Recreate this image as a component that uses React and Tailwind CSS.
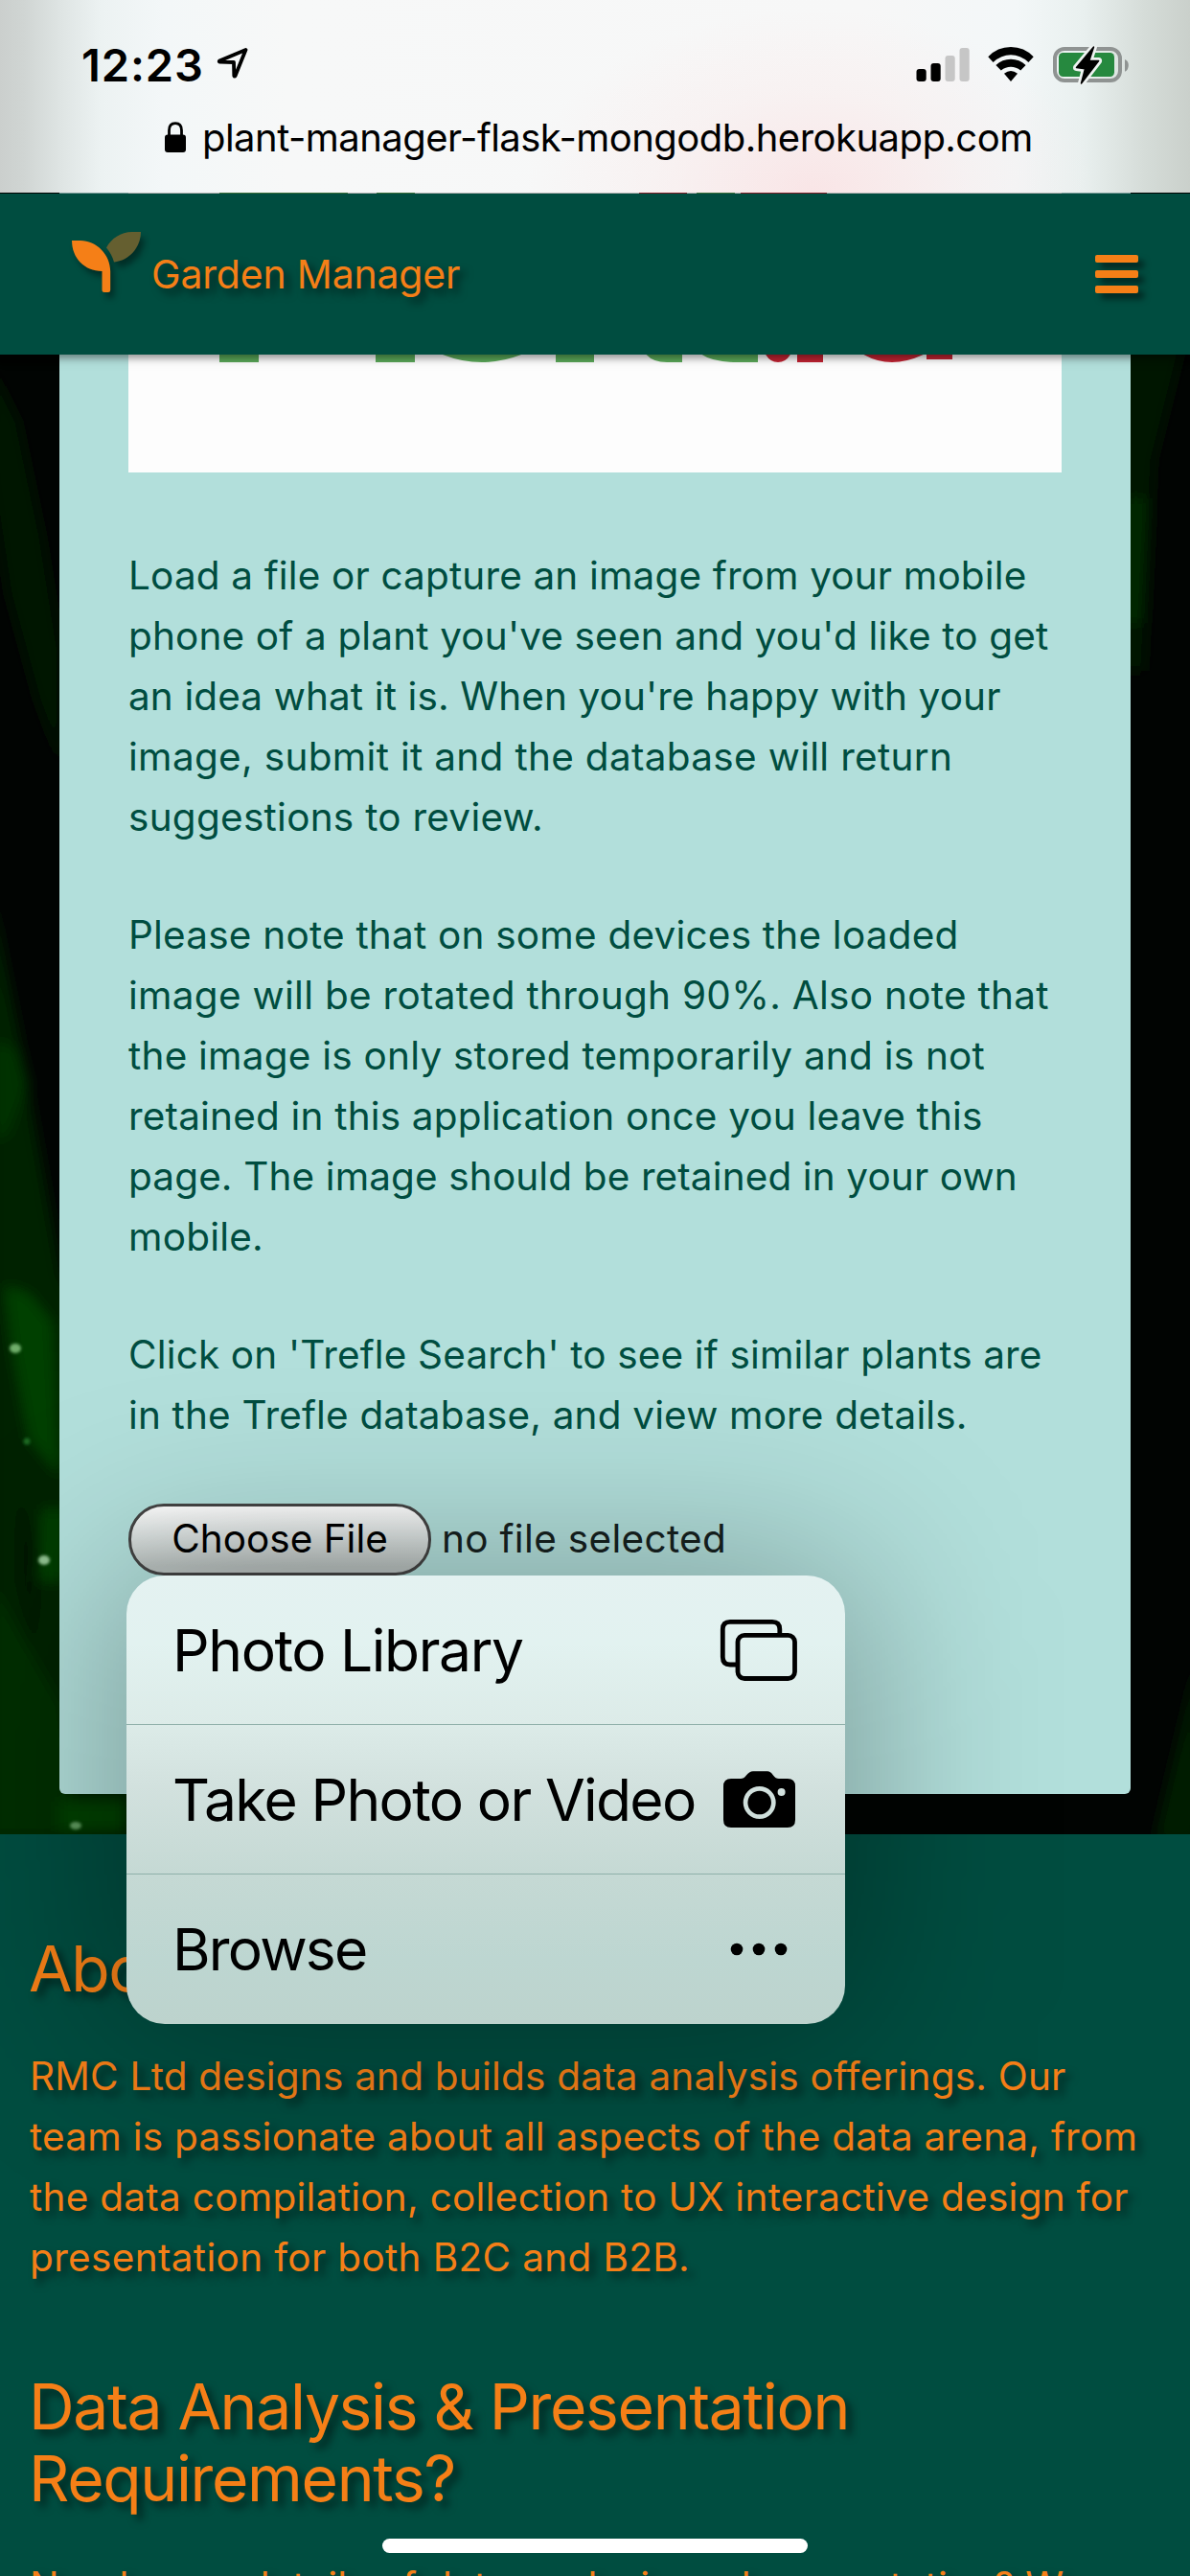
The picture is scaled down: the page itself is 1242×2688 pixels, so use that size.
import React from "react";

const intro = [
  [
    ["Load a file or capture an image from your mobile", "tracking-[0.15px]"],
    ["phone of a plant you've seen and you'd like to get", "tracking-[0.15px]"],
    ["an idea what it is. When you're happy with your", "tracking-[0.11px]"],
    ["image, submit it and the database will return", "tracking-[0.31px]"],
    ["suggestions to review.", "tracking-[0.26px]"],
  ],
  [
    ["Please note that on some devices the loaded", "tracking-[0.21px]"],
    ["image will be rotated through 90%. Also note that", "tracking-[0.28px]"],
    ["the image is only stored temporarily and is not", "tracking-[0.22px]"],
    ["retained in this application once you leave this", "tracking-[0.18px]"],
    ["page. The image should be retained in your own", "tracking-[0.12px]"],
    ["mobile.", "tracking-[0.2px]"],
  ],
  [
    ["Click on 'Trefle Search' to see if similar plants are", "tracking-[0.15px]"],
    ["in the Trefle database, and view more details.", "tracking-[0.16px]"],
  ],
];

const about = [
  ["RMC Ltd designs and builds data analysis offerings. Our", "tracking-[0.21px]"],
  ["team is passionate about all aspects of the data arena, from", "tracking-[0.24px]"],
  ["the data compilation, collection to UX interactive design for", "tracking-[0.27px]"],
  ["presentation for both B2C and B2B.", "tracking-[0.34px]"],
];

function Lines({ lines, className = "" }) {
  return (
    <p className={"text-[40.5px] leading-[63px] whitespace-nowrap " + className}>
      {lines.map(([text, tracking]) => (
        <span key={text} className={"block " + tracking}>
          {text}
        </span>
      ))}
    </p>
  );
}

function LocationArrow() {
  return (
    <svg className="ml-[13px] mt-[1px] h-[34px] w-[34px]" viewBox="0 0 34 34" fill="none" stroke="#000" strokeWidth="3.8" strokeLinejoin="round">
      <path d="M30.5 3 L3 14.6 Q2.4 15.4 3.4 15.6 L18 16 L18.3 30 Q18.8 31.4 19.6 30 Z" />
    </svg>
  );
}

function Signal() {
  return (
    <svg className="h-[40px] w-[56px]" viewBox="0 0 56 40">
      <rect x="0.5" y="24" width="10.2" height="13" rx="3" />
      <rect x="15.5" y="18" width="10.2" height="19" rx="3" />
      <rect x="30.5" y="10" width="10.2" height="27" rx="3" fill="#c6c6c6" />
      <rect x="45.5" y="2" width="10.2" height="35" rx="3" fill="#c6c6c6" />
    </svg>
  );
}

function Wifi() {
  return (
    <svg className="ml-[19px] h-[40px] w-[48px]" viewBox="0 0 48 40">
      <path d="M0.3 11.2 Q10 1 24 1 Q38 1 47.7 11.2 L42.4 16.9 Q34 9.2 24 9.2 Q14 9.2 5.6 16.9 Z" />
      <path d="M8.4 19.9 Q15 13.8 24 13.8 Q33 13.8 39.6 19.9 L34.2 25.5 Q29.5 21.8 24 21.8 Q18.5 21.8 13.8 25.5 Z" />
      <path d="M17 28.7 Q20.5 26 24 26 Q27.5 26 31 28.7 L24 37 Z" />
    </svg>
  );
}

function Battery() {
  const bolt = "M24.5 22.5 L42.5 1 L37.8 15.2 L47.6 15.6 L29.5 39 L33.5 23.7 Z";
  return (
    <svg className="ml-[20px] h-[40px] w-[80px]" viewBox="0 0 80 40">
      <rect x="2" y="3" width="68" height="33" rx="10" fill="none" stroke="#8f9392" strokeWidth="4" />
      <rect x="6" y="7" width="58" height="25" rx="4.5" fill="#26893f" />
      <path d="M75 14 Q78.8 15.6 78.8 20 Q78.8 25 75 26.8 Z" fill="#8f9392" />
      <path d={bolt} fill="none" stroke="#eff3f2" strokeWidth="7" strokeLinejoin="round" />
      <path d={bolt} stroke="#000" strokeWidth="1.5" strokeLinejoin="round" />
    </svg>
  );
}

function Sprout() {
  return (
    <svg
      className="h-[64px] w-[72px] overflow-visible drop-shadow-[4px_6px_3px_rgba(0,0,0,0.4)]"
      viewBox="75 242 72 64"
    >
      <path d="M75 251 H84 C101 251 115.2 266 115.2 283 V302.5 Q115.2 305 113 305 H109 Q106.5 305 106.5 302.5 V283 C88 283 75 269 75 251 Z" fill="#f57f17" />
      <path d="M147 242 H138 C126 242 116 249 111 258.5 C115 263 117.5 268 119 273.5 C135 272 147 258 147 242 Z" fill="#655f30" />
    </svg>
  );
}

function LeafPhoto() {
  return (
    <svg className="absolute inset-0 h-full w-full" viewBox="0 370 1242 1544" preserveAspectRatio="none">
      <defs>
        <filter id="soft" filterUnits="userSpaceOnUse" x="-60" y="300" width="1380" height="1700">
          <feGaussianBlur stdDeviation="7" />
        </filter>
        <filter id="tiny" filterUnits="userSpaceOnUse" x="0" y="1380" width="140" height="560">
          <feGaussianBlur stdDeviation="1.5" />
        </filter>
      </defs>
      <rect x="0" y="370" width="1242" height="1544" fill="#010402" />
      <g filter="url(#soft)">
        <path d="M-10 380 L20 440 L45 560 L64 680 L64 800 L38 730 L8 620 L-10 500 Z" fill="#021702" />
        <path d="M-10 930 L20 1080 L64 1330 L140 1500 V1930 H-10 Z" fill="#022402" />
        <path d="M-10 1085 L18 1095 L30 1130 L8 1185 L-10 1190 Z" fill="#043304" />
        <path d="M5 1342 L30 1350 L54 1380 L62 1540 L30 1500 L12 1400 Z" fill="#034103" />
        <path d="M44 1575 H66 V1650 H40 Z" fill="#033c03" />
        <path d="M20 1560 L40 1620 L36 1720 L20 1650 Z" fill="#011401" />
        <path d="M-10 1650 L64 1780 L80 1914 H-10 Z" fill="#022e02" />
        <path d="M62 1880 H130 V1910 H62 Z" fill="#033f03" />
        <path d="M1170 360 H1235 L1205 480 L1195 700 H1170 Z" fill="#021802" />
        <path d="M1175 520 H1196 L1190 650 H1175 Z" fill="#032c05" />
        <path d="M1250 1730 L1205 1920 H1250 Z" fill="#021c02" />
      </g>
      <g filter="url(#tiny)">
        <ellipse cx="16" cy="1407" rx="6" ry="5" fill="#6fae6a" />
        <circle cx="28" cy="1504" r="3.5" fill="#1f6a24" />
        <ellipse cx="46" cy="1628" rx="6" ry="5" fill="#8fbf8f" />
        <ellipse cx="79" cy="1905" rx="6" ry="4" fill="#5f9a5f" />
      </g>
    </svg>
  );
}

function LogoBottom() {
  return (
    <svg className="block h-[8px] w-[974px]" viewBox="134 370 974 8">
      <g fill="#5cab5a">
        <rect x="229" y="368" width="41" height="10" />
        <rect x="392" y="368" width="41" height="10" />
        <path d="M457 368 H549 Q526 378 503 378 Q480 378 457 368 Z" />
        <rect x="580" y="368" width="40" height="10" />
        <path d="M673 368 H712 V378 H696 Q680 378 673 368 Z" />
        <path d="M730 368 H791 V378 H765 Q740 377 730 368 Z" />
      </g>
      <g fill="#c42433">
        <path d="M798 368 H826 Q821 378 812 378 Q803 378 798 368 Z" />
        <rect x="832" y="368" width="27" height="10" />
        <path d="M898 368 H968 Q948 378 931 378 Q914 378 898 368 Z" />
        <rect x="967" y="368" width="27" height="7" />
      </g>
    </svg>
  );
}

function PhotosIcon() {
  return (
    <svg className="h-[66px] w-[82px]" viewBox="751 1690 82 66" fill="none" stroke="#000" strokeWidth="4.8">
      <path d="M768 1738 H762 Q754.3 1738 754.3 1730 V1701 Q754.3 1693.3 762 1693.3 H806 Q813.8 1693.3 813.8 1701 V1707" />
      <rect x="770" y="1707.3" width="59.5" height="45.2" rx="7" />
    </svg>
  );
}

function CameraIcon() {
  return (
    <svg className="mr-[2px] h-[60px] w-[76px]" viewBox="754 1848 76 60">
      <path
        fillRule="evenodd"
        d="M754 1864 Q754 1856 762 1856 H772 Q775.5 1856 777.5 1853 Q781 1848.3 785 1848.3 H800 Q803 1848.3 806 1852.5 Q808.5 1856 812 1856 H821 Q829 1856 829 1864 V1899 Q829 1907 821 1907 H762 Q754 1907 754 1899 Z M791.7 1864 A17 17 0 1 0 791.7 1898 A17 17 0 1 0 791.7 1864 Z M814.6 1866 A4 4 0 1 0 814.6 1874 A4 4 0 1 0 814.6 1866 Z"
      />
      <circle cx="791.7" cy="1881" r="12.3" />
    </svg>
  );
}

function MoreIcon() {
  return (
    <svg className="mr-[11px] h-[14px] w-[60px]" viewBox="761 2028 60 14">
      <circle cx="768" cy="2035" r="6.3" />
      <circle cx="791" cy="2035" r="6.3" />
      <circle cx="814" cy="2035" r="6.3" />
    </svg>
  );
}

const menu = [
  ["Photo Library", "tracking-[-1.38px] pl-[48px]", PhotosIcon],
  ["Take Photo or Video", "tracking-[-1.65px] pl-[48px]", CameraIcon],
  ["Browse", "tracking-[-1.8px] pl-[48px]", MoreIcon],
];

export default function App() {
  return (
    <div className="relative flex h-[2688px] w-[1242px] flex-col overflow-hidden bg-[#004d40] font-['Inter','Liberation_Sans',sans-serif] text-black">
      <div className="relative z-30 flex h-[201px] shrink-0 flex-col bg-[radial-gradient(ellipse_300px_190px_at_850px_200px,rgba(250,218,220,0.62),rgba(250,225,225,0.25)_55%,rgba(250,230,230,0)),linear-gradient(90deg,#cbcfcd_0px,#d0d5d3_25px,#dfe5e4_65px,#ecf2f2_105px,#f3f7f8_170px,#f7f8f8_300px,#f7f7f7_900px,#f3f7f8_1060px,#e9f0ef_1130px,#d5dcd8_1195px,#cad0cb_1242px)]">
        <div className="flex h-[114px] items-start pt-[48px] pr-[63px] pl-[85px]">
          <span className="-mt-[8px] text-[47px] leading-[56px] font-semibold tracking-[0.9px]">12:23</span>
          <LocationArrow />
          <div className="ml-auto flex">
            <Signal />
            <Wifi />
            <Battery />
          </div>
        </div>
        <div className="flex h-[57px] pl-[172px]">
          <svg className="mt-[13px] h-[32px] w-[22px]" viewBox="0 0 22 32">
            <path d="M4.5 16 V9 Q4.5 1.6 11 1.6 Q17.5 1.6 17.5 9 V16" fill="none" stroke="#000" strokeWidth="2.8" />
            <rect x="0" y="13.5" width="22" height="18.5" rx="3" />
          </svg>
          <span className="ml-[17px] text-[40px] leading-[59px] tracking-[-0.53px] whitespace-nowrap">
            plant-manager-flask-mongodb.herokuapp.com
          </span>
        </div>
      </div>

      <div className="relative z-30 flex h-px shrink-0">
        <div className="w-[62px] bg-black" />
        <div className="w-[72px] bg-[#7d9d9a]" />
        <div className="flex w-[974px] bg-[#b3b3b3]">
          <div className="ml-[95px] w-[134px] bg-[#3a6d3a]" />
          <div className="ml-[30px] w-[40px] bg-[#3a6d3a]" />
          <div className="ml-[234px] w-[50px] bg-[#7d1a24]" />
          <div className="ml-[10px] w-[40px] bg-[#3a6d3a]" />
          <div className="ml-[6px] w-[90px] bg-[#7d1a24]" />
        </div>
        <div className="w-[72px] bg-[#7d9d9a]" />
        <div className="w-[62px] bg-black" />
      </div>

      <header className="relative z-20 flex h-[168px] shrink-0 items-center bg-[#004d40] pr-[54px] pl-[75px] shadow-[0_6px_6px_0_rgba(0,0,0,0.14),0_3px_15px_0_rgba(0,0,0,0.12),0_2px_6px_rgba(0,0,0,0.25)]">
        <div className="mt-[-25px]">
          <Sprout />
        </div>
        <span className="ml-[11px] text-[41px] leading-[168px] tracking-[-0.19px] text-[#f57f17] [text-shadow:6px_6px_9px_rgba(0,0,0,0.55)]">
          Garden Manager
        </span>
        <div className="ml-auto flex flex-col gap-[8px]">
          <div className="h-[8px] w-[45px] rounded-[2px] bg-[#f57f17] shadow-[6px_6px_6px_rgba(0,0,0,0.5)]" />
          <div className="h-[8px] w-[45px] rounded-[2px] bg-[#f57f17] shadow-[6px_6px_6px_rgba(0,0,0,0.5)]" />
          <div className="h-[8px] w-[45px] rounded-[2px] bg-[#f57f17] shadow-[6px_6px_6px_rgba(0,0,0,0.5)]" />
        </div>
      </header>

      <main className="relative h-[1544px] shrink-0 px-[62px]">
        <LeafPhoto />
        <section className="relative flex h-[1502px] flex-col rounded-b-[6px] bg-[#b2dfdb] px-[72px] text-[#004d40]">
          <div className="h-[123px] shrink-0 bg-[#fdfdfd]">
            <LogoBottom />
          </div>
          <div className="mt-[76px] flex flex-col gap-[60px]">
            {intro.map((lines) => (
              <Lines key={lines[0][0]} lines={lines} />
            ))}
          </div>
          <div className="mt-[61px] flex items-center">
            <button className="h-[75px] w-[316px] rounded-[37px] border-[3px] border-[#444] bg-[linear-gradient(180deg,#fff,#dfe5e4_40%,#bac2c0_90%)] text-[40.5px] text-black">
              Choose File
            </button>
            <span className="ml-[11px] text-[40.5px] tracking-[0.32px] whitespace-nowrap text-[#16211f]">
              no file selected
            </span>
          </div>
        </section>

        <div className="absolute top-[1264px] left-[112px] z-10 h-[488px] w-[790px] rounded-[60px] bg-black/30 blur-[95px]" />
        <div className="absolute top-[1274px] left-[132px] z-10 flex h-[468px] w-[750px] flex-col rounded-[40px] bg-[linear-gradient(180deg,#e4f2f1_0px,#e2f2f0_70px,#dcebe8_156px,#d2e1de_220px,#c5d9d4_312px,#bdd6d1_400px,#bdd3cd_468px)]">
          {menu.map(([label, tracking, Icon], i) => (
            <div
              key={label}
              className={
                "flex h-[156px] items-center justify-between pr-[49px] " +
                (i < 2 ? "border-b border-[#8fb0aa]" : "")
              }
            >
              <span className={"text-[60.5px] leading-[76px] whitespace-nowrap " + tracking}>{label}</span>
              <Icon />
            </div>
          ))}
        </div>
      </main>

      <footer className="flex h-[774px] shrink-0 flex-col overflow-hidden px-[31px] pt-[103px] text-[#f57f17] [text-shadow:6px_6px_9px_rgba(0,0,0,0.55)]">
        <h2 className="-ml-[1px] text-[66px] leading-[75px] tracking-[-1.38px]">About</h2>
        <Lines lines={about} className="mt-[43px]" />
        <h2 className="-ml-[1px] mt-[87px] text-[66px] leading-[75px] tracking-[-1.36px] whitespace-nowrap">
          Data Analysis &amp; Presentation
          <br />
          Requirements?
        </h2>
        <Lines
          lines={[["Need more details of data analysis and presentation? We", "tracking-[0.24px]"]]}
          className="mt-[43px]"
        />
      </footer>

      <div className="absolute bottom-[24px] left-[399px] z-30 h-[15px] w-[444px] rounded-full bg-white" />
    </div>
  );
}
